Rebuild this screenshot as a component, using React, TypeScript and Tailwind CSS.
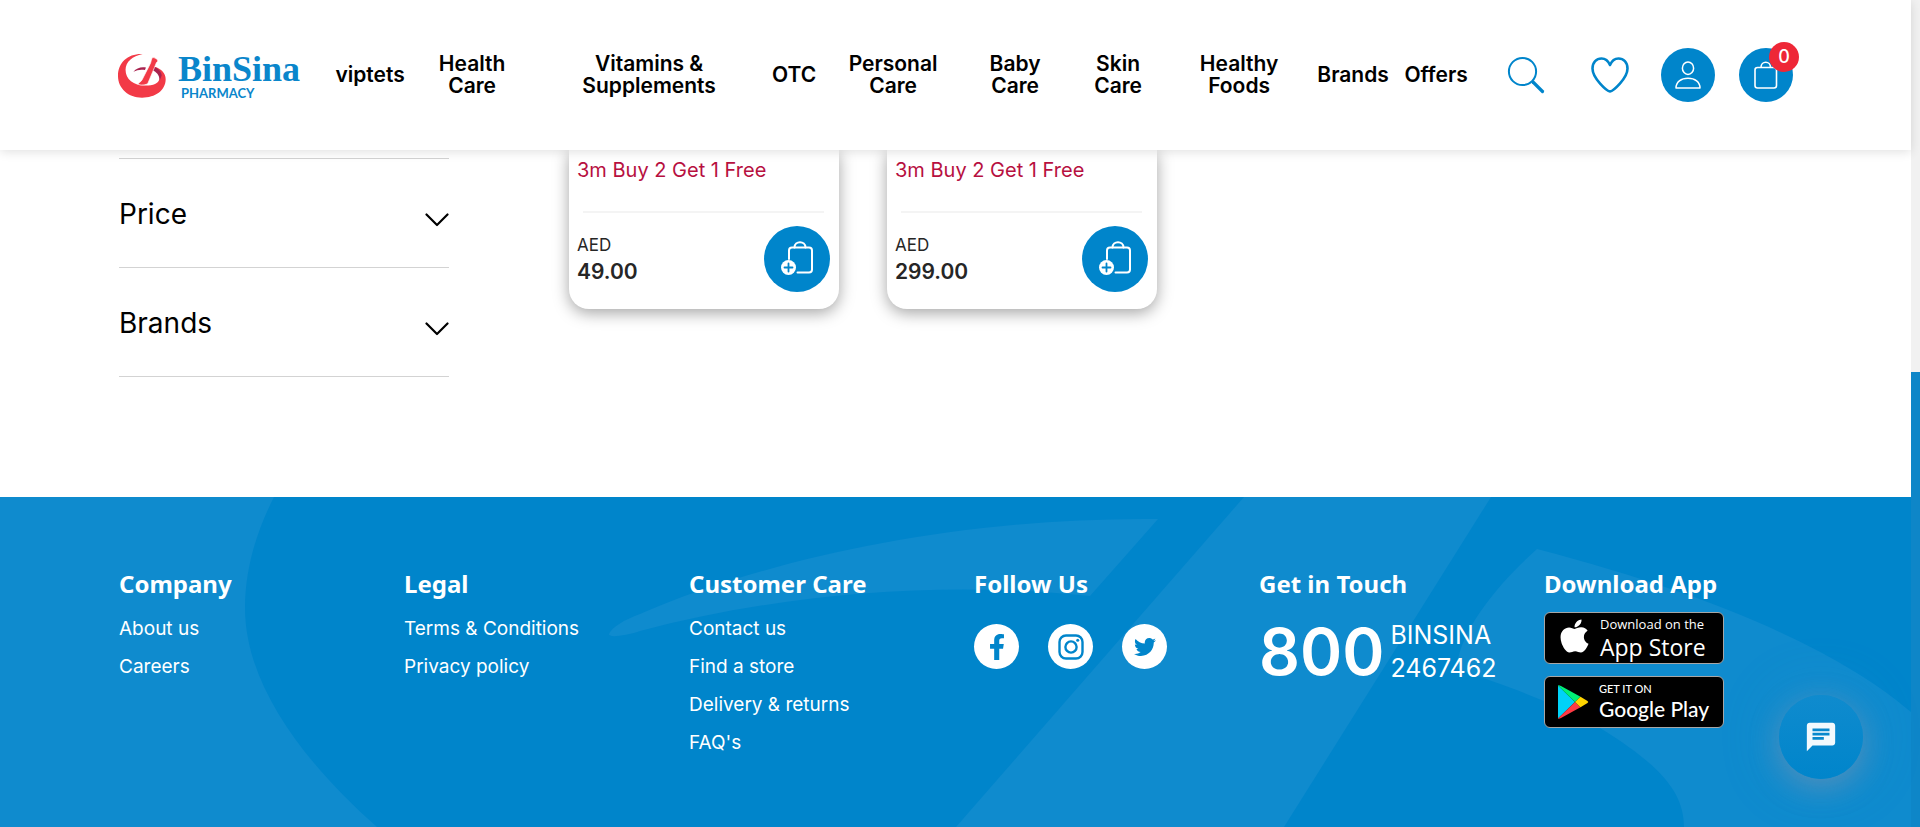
import React from "react";
import { FaApple, FaFacebookF, FaTwitter } from "react-icons/fa";
import { MdChat } from "react-icons/md";

type NavItem = { lines: string[]; width: string };

const navItems: NavItem[] = [
  { lines: ["viptets"], width: "w-[84px]" },
  { lines: ["Health", "Care"], width: "w-[120px]" },
  { lines: ["Vitamins &", "Supplements"], width: "w-[234px]" },
  { lines: ["OTC"], width: "w-[56px]" },
  { lines: ["Personal", "Care"], width: "w-[142px]" },
  { lines: ["Baby", "Care"], width: "w-[102px]" },
  { lines: ["Skin", "Care"], width: "w-[104px]" },
  { lines: ["Healthy", "Foods"], width: "w-[138px]" },
  { lines: ["Brands"], width: "w-[90px]" },
  { lines: ["Offers"], width: "w-[76px]" },
];

const linkGroups = [
  { title: "Company", links: ["About us", "Careers"] },
  { title: "Legal", links: ["Terms & Conditions", "Privacy policy"] },
  { title: "Customer Care", links: ["Contact us", "Find a store", "Delivery & returns", "FAQ's"] },
];

const products = [
  { promo: "3m Buy 2 Get 1 Free", price: "49.00" },
  { promo: "3m Buy 2 Get 1 Free", price: "299.00" },
];

function Logo() {
  return (
    <a href="#" className="flex items-center gap-3 text-[#0a86cb]">
      <svg viewBox="57 67 146 135" className="h-[45px] w-12" aria-hidden="true">
        <path
          d="M132 69C88 67 57 94 57 136C57 174 89 202 130 202C170 202 202 180 202 146C202 128 189 114 168 108C178 119 185 133 183 145C180 159 165 165 140 165C104 165 80 146 80 117C80 93 101 75 132 69Z"
          fill="#f23a47"
        />
        <path d="M104 123C113 111 128 107 142 110L139 118C126 115 115 118 104 123Z" fill="#a8234f" />
        <path d="M164 107C178 111 188 121 190 134C188 140 186 146 184 149C183 134 174 123 160 118Z" fill="#a8234f" />
        <path
          d="M160 83C162 78 168 80 174 84C180 88 179 92 174 95L168 110L148 158C145 164 121 165 119 161C118 157 126 155 130 148L154 101C158 94 157 90 160 83Z"
          fill="#f23a47"
          stroke="#fff"
          strokeWidth="2"
        />
      </svg>
      <span className="flex flex-col pt-1">
        <span className="font-['Liberation_Serif',serif] text-4xl leading-8 font-bold">BinSina</span>
        <span className="pl-[3px] font-['Lato',sans-serif] text-[13px] leading-4 font-bold">PHARMACY</span>
      </span>
    </a>
  );
}

function Header() {
  return (
    <header className="relative z-10 flex h-[150px] items-center justify-between bg-white px-[118px] shadow-[0_2px_10px_rgba(0,0,0,0.12)]">
      <div className="flex items-center gap-7">
        <Logo />
        <nav>
          <ul className="flex items-center">
            {navItems.map((item) => (
              <li key={item.lines.join(" ")} className={`${item.width} text-center`}>
                <a href="#" className="block text-[21px] leading-[22px] font-semibold whitespace-nowrap text-black">
                  {item.lines.map((line) => (
                    <span key={line} className="block">{line}</span>
                  ))}
                </a>
              </li>
            ))}
          </ul>
        </nav>
      </div>
      <div className="flex items-center">
        <button type="button" aria-label="Search" className="mr-[46px]">
          <svg viewBox="0 0 38 38" className="size-[38px]" fill="none" stroke="#0085cb" strokeLinecap="round">
            <circle cx="15.500" cy="15.500" r="13.600" strokeWidth="2" />
            <path d="M26 26L35.500 35.500" strokeWidth="3.200" />
          </svg>
        </button>
        <button type="button" aria-label="Wishlist" className="mr-8">
          <svg viewBox="0 0 38 38" className="size-[38px]" fill="none" stroke="#0085cb" strokeWidth="2.600" strokeLinejoin="round">
            <path d="M19 35.500C16 35 1.500 22.500 1.500 12.500C1.500 6 5.500 2.500 10.500 2.500C15 2.500 17.500 5.500 19 9C20.500 5.500 23 2.500 27.500 2.500C32.500 2.500 36.500 6 36.500 12.500C36.500 22.500 22 35 19 35.500Z" />
          </svg>
        </button>
        <button type="button" aria-label="Account" className="mr-6 flex size-[54px] items-center justify-center rounded-full bg-[#0085cb]">
          <svg viewBox="0 0 26 28" className="h-7 w-[26px]" fill="none" stroke="#fff" strokeWidth="1.500" strokeLinejoin="round">
            <ellipse cx="13" cy="7.200" rx="5.600" ry="6.200" />
            <path d="M1 27C1 21 6 17.200 13 17.200S25 21 25 27Z" />
          </svg>
        </button>
        <button type="button" aria-label="Cart" className="relative flex size-[54px] items-center justify-center rounded-full bg-[#0085cb]">
          <svg viewBox="0 0 24 28" className="h-7 w-6" fill="none" stroke="#fff" strokeWidth="1.600">
            <rect x="1" y="6.500" width="21.500" height="20.500" rx="2.500" />
            <path d="M7 6.500C7 -0.500 16.500 -0.500 16.500 6.500" />
          </svg>
          <span className="absolute -top-1.5 -right-1.5 flex size-[30px] items-center justify-center rounded-full bg-[#ee2737] text-lg font-medium text-white">
            0
          </span>
        </button>
      </div>
    </header>
  );
}

function Filters() {
  return (
    <aside className="w-[330px] border-t border-[#d3d3d3]">
      {["Price", "Brands"].map((name) => (
        <button key={name} type="button" className="flex h-[109px] w-full items-center justify-between border-b border-[#d3d3d3] pt-0.5 text-left text-[28px] text-black">
          <span>{name}</span>
          <svg viewBox="0 0 24 14" className="mt-3 h-3.5 w-6" fill="none" stroke="#000" strokeWidth="2.200" strokeLinecap="round" strokeLinejoin="round">
            <path d="M1.500 1.500L12 12L22.500 1.500" />
          </svg>
        </button>
      ))}
    </aside>
  );
}

function BagPlusIcon() {
  return (
    <svg viewBox="0 0 34 36" className="h-9 w-[34px]" fill="none" stroke="#fff" strokeWidth="2" strokeLinecap="round">
      <path d="M9 18V9.500C9 7.500 10 6.500 12 6.500H29C31 6.500 32 7.500 32 9.500V28.500C32 30.500 31 31.500 29 31.500H17.500" />
      <path d="M14.500 6.500C14.500 -0.500 25.500 -0.500 25.500 6.500" />
      <circle cx="8.500" cy="26.500" r="7.500" fill="#fff" stroke="none" />
      <path d="M8.500 22.500V30.500M4.500 26.500H12.500" stroke="#0085cb" strokeWidth="1.800" />
    </svg>
  );
}

function ProductCard({ promo, price }: { promo: string; price: string }) {
  return (
    <article className="w-[270px] rounded-b-[20px] bg-white pt-1.5 pr-[9px] pb-[17px] pl-2 shadow-[0_4px_16px_rgba(0,0,0,0.36)]">
      <p className="text-xl leading-7 text-[#b7103f]">{promo}</p>
      <hr className="mx-1.5 mt-[27px] border-t-2 border-[#f4f4f4]" />
      <div className="flex items-center justify-between pt-[13px]">
        <p className="flex flex-col text-[#262626]">
          <span className="text-[17px] leading-[26px]">AED</span>
          <span className="text-[21px] leading-7 font-semibold">{price}</span>
        </p>
        <button type="button" aria-label="Add to cart" className="flex size-[66px] items-center justify-center rounded-full bg-[#0085cb]">
          <BagPlusIcon />
        </button>
      </div>
    </article>
  );
}

function FooterPattern() {
  return (
    <svg viewBox="0 0 1911 330" preserveAspectRatio="none" className="absolute inset-0 size-full" fill="#0f8bce" aria-hidden="true">
      <path d="M0 0H274C255 37 245 75 245 111C245 185 300 262 377 330H0Z" />
      <path d="M1158 22L1090 99C940 83 780 97 640 134C625 139 608 141 609 137C612 130 624 123 640 117C760 65 950 20 1158 22Z" />
      <path d="M1244 0H1491L1284 330H956Z" />
      <path d="M1537 52C1500 85 1462 130 1457 168C1456 172 1460 173 1465 175C1500 186 1560 208 1600 231C1660 268 1684 295 1684 330H1911V215C1850 163 1740 105 1537 52Z" />
    </svg>
  );
}

function FooterColumn({ title, children }: { title: string; children: React.ReactNode }) {
  return (
    <section>
      <h2 className="font-['Noto_Sans',sans-serif] text-2xl leading-9 font-bold whitespace-nowrap">{title}</h2>
      {children}
    </section>
  );
}

function SocialLinks() {
  const circle = "flex size-[45px] items-center justify-center rounded-full bg-white text-[#0085cb]";
  return (
    <div className="mt-[22px] flex gap-[29px]">
      <a href="#" aria-label="Facebook" className={circle}>
        <FaFacebookF size={26} />
      </a>
      <a href="#" aria-label="Instagram" className={circle}>
        <svg viewBox="0 0 26 26" className="size-[26px]" fill="none" stroke="currentColor" strokeWidth="2.400">
          <rect x="1.500" y="1.500" width="23" height="23" rx="6.500" />
          <circle cx="13" cy="13" r="5.600" />
          <circle cx="19.700" cy="6.300" r="1.500" fill="currentColor" stroke="none" />
        </svg>
      </a>
      <a href="#" aria-label="Twitter" className={circle}>
        <FaTwitter size={22} />
      </a>
    </div>
  );
}

function StoreBadges() {
  const badge = "flex h-[52px] w-[180px] items-center rounded-md border border-[#a6a6a6] bg-black text-white";
  return (
    <div className="mt-2.5 flex flex-col gap-3">
      <a href="#" className={`${badge} gap-[11px] pl-[15px] font-['Open_Sans',sans-serif]`}>
        <FaApple size={38} className="-mt-1 w-[29px]" />
        <span className="flex flex-col whitespace-nowrap">
          <span className="text-[13px] leading-[18px] font-medium">Download on the</span>
          <span className="text-[23px] leading-7 font-medium">App Store</span>
        </span>
      </a>
      <a href="#" className={`${badge} gap-2.5 pl-3 font-['Lato',sans-serif]`}>
        <svg viewBox="0 0 32 34" className="h-[34px] w-8" aria-hidden="true">
          <path d="M1 0.500V33.500L18 17Z" fill="#00d2f8" />
          <path d="M1 0.500L18 17L23.500 11.800L4 1C2.500 0.200 1.500 0 1 0.500Z" fill="#00f076" />
          <path d="M1 33.500L18 17L23.500 22.200L4 33C2.500 33.800 1.500 34 1 33.500Z" fill="#ff3a44" />
          <path d="M18 17L23.500 11.800L30.500 16Q32 17 30.500 18L23.500 22.200Z" fill="#ffd400" />
        </svg>
        <span className="flex flex-col whitespace-nowrap">
          <span className="text-[11px] leading-[14px] font-medium">GET IT ON</span>
          <span className="text-[21px] leading-[26px] font-medium">Google Play</span>
        </span>
      </a>
    </div>
  );
}

function Footer() {
  return (
    <footer className="relative flex-1 bg-[#0085cb] pt-[69px] pr-[82px] pb-12 pl-[119px] text-white">
      <FooterPattern />
      <div className="relative grid grid-cols-6">
        {linkGroups.map((group) => (
          <FooterColumn key={group.title} title={group.title}>
            <ul className="mt-2">
              {group.links.map((link) => (
                <li key={link} className="h-[38px]">
                  <a href="#" className="text-[19px] leading-[38px] whitespace-nowrap">{link}</a>
                </li>
              ))}
            </ul>
          </FooterColumn>
        ))}
        <FooterColumn title="Follow Us">
          <SocialLinks />
        </FooterColumn>
        <FooterColumn title="Get in Touch">
          <a href="tel:8002467462" className="mt-[17px] flex items-center gap-1.5">
            <span className="text-[64px] leading-[66px] font-semibold">800</span>
            <span className="flex flex-col text-[25px] leading-[33px]">
              <span>BINSINA</span>
              <span>2467462</span>
            </span>
          </a>
        </FooterColumn>
        <FooterColumn title="Download App">
          <StoreBadges />
        </FooterColumn>
      </div>
    </footer>
  );
}

export default function App() {
  return (
    <div className="flex min-h-screen bg-white font-['Inter',sans-serif]">
      <div className="relative flex min-w-0 flex-1 flex-col">
        <Header />
        <main className="flex items-start gap-[120px] px-[119px] pb-[120px]">
          <div className="pt-2">
            <Filters />
          </div>
          <div className="flex gap-12">
            {products.map((product) => (
              <ProductCard key={product.price} {...product} />
            ))}
          </div>
        </main>
        <Footer />
        <button
          type="button"
          aria-label="Open chat"
          className="absolute right-12 bottom-12 flex size-[84px] items-center justify-center rounded-full bg-linear-to-b from-[#0f8bce] to-[#0085cb] text-[#f2f9fd] shadow-[0_8px_30px_rgba(200,150,150,0.35),0_0_60px_rgba(60,155,215,0.3)]"
        >
          <MdChat size={34} />
        </button>
      </div>
      <div className="flex w-[9px] flex-col bg-[#f1f1f1] pt-[372px]" aria-hidden="true">
        <div className="flex-1 bg-[#0e86c8]" />
      </div>
    </div>
  );
}
